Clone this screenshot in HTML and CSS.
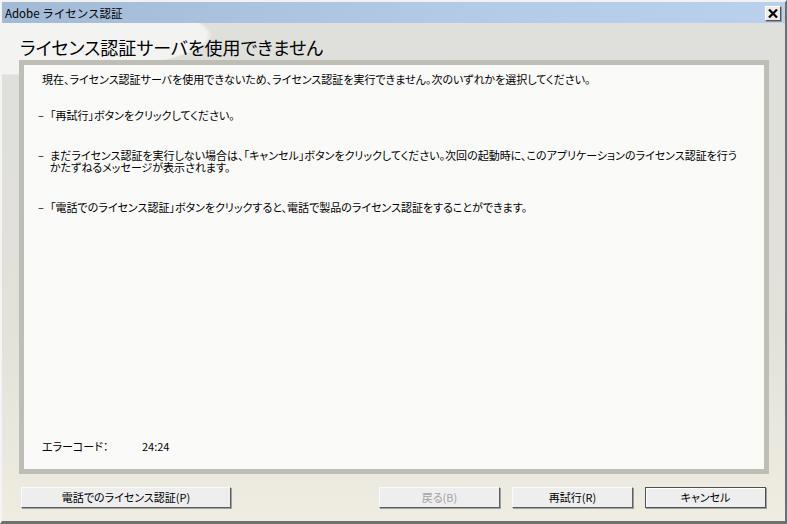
FILE: index.html
```html
<!DOCTYPE html>
<html lang="ja">
<head>
<meta charset="UTF-8">
<title>Adobe ライセンス認証</title>
<link rel="stylesheet" href="styles.css">
</head>
<body>
<div class="window">
  <div class="titlebar">
    <span class="title-text">Adobe ライセンス認証</span>
    <button class="close-btn" aria-label="閉じる">
      <svg width="10" height="9" viewBox="0 0 10 9"><path d="M1 0.5 L9 8.5 M9 0.5 L1 8.5" stroke="#000" stroke-width="2.2"/></svg>
    </button>
  </div>
  <div class="content">
    <h1 class="heading">ライセンス認証サーバを使用できません</h1>
    <div class="panel">
      <p class="lead">現在、ライセンス認証サーバを使用できないため、ライセンス認証を実行できません。次のいずれかを選択してください。</p>
      <ul class="items">
        <li><span class="dash">–</span><span>「再試行」ボタンをクリックしてください。</span></li>
        <li><span class="dash">–</span><span>まだライセンス認証を実行しない場合は、「キャンセル」ボタンをクリックしてください。次回の起動時に、このアプリケーションのライセンス認証を行う<br>かたずねるメッセージが表示されます。</span></li>
        <li><span class="dash">–</span><span>「電話でのライセンス認証」ボタンをクリックすると、電話で製品のライセンス認証をすることができます。</span></li>
      </ul>
      <div class="error-code">
        <span class="code-label">エラーコード：</span>
        <span>24:24</span>
      </div>
    </div>
    <div class="buttons">
      <button class="btn btn-phone">電話でのライセンス認証(P)</button>
      <div class="btn-group">
        <button class="btn" disabled>戻る(B)</button>
        <button class="btn">再試行(R)</button>
        <button class="btn btn-default">キャンセル</button>
      </div>
    </div>
  </div>
</div>
</body>
</html>
```

FILE: styles.css
```css
* { margin: 0; padding: 0; box-sizing: border-box; }
body {
  font-family: "Noto Sans CJK JP", "Liberation Sans", sans-serif;
  font-size: 11px;
  font-feature-settings: "palt";
  color: #000;
  background: #dfdfdb;
}
.window {
  width: 787px; height: 524px;
  display: flex; flex-direction: column;
  border-top: 2px solid #f2f2f2;
  border-left: 2px solid #f4f4f4;
  border-right: 2px solid #6f6f6f;
  border-bottom: 3px solid #6f6f6f;
  box-shadow: inset -1px 0 0 #c8c8c4;
}
.titlebar {
  height: 21px; flex: none;
  display: flex; align-items: center; justify-content: space-between;
  padding: 0 4px 0 3px;
  background: linear-gradient(90deg, #a2bad6, #b3cbe6 60%, #b9d1ec);
}
.title-text { font-size: 11.5px; line-height: 14px; font-feature-settings: normal; }
.close-btn {
  width: 16px; height: 15px;
  display: flex; align-items: center; justify-content: center;
  background: #ececea;
  border: 1px solid;
  border-color: #fff #555 #555 #fff;
  box-shadow: 1px 1px 0 #999;
  margin-top: 1px;
}
.content {
  flex: 1;
  display: flex; flex-direction: column;
  background:
    radial-gradient(ellipse 200px 40px at 10px 12px, #f3f3f1 97%, transparent 100%),
    linear-gradient(180deg, #dfdfdb 0%, #e2e1da 60%, #efede1 100%);
}
.heading {
  font-size: 18px; font-weight: normal;
  line-height: 20px;
  padding: 14px 0 0 18px;
  height: 37px;
}
.panel {
  margin-left: 17px;
  width: 750px; height: 414px;
  border: 5px solid #bebeb7;
  background: #fafaf8;
  display: flex; flex-direction: column;
  padding: 8px 0 17px 18px;
}
.lead { line-height: 12px; white-space: nowrap; }
.items { list-style: none; margin-top: 24px; padding-left: 0; margin-left: -5px; }
.items li { display: flex; line-height: 12px; margin-bottom: 28px; white-space: nowrap; }
.dash { width: 13px; flex: none; padding-left: 1px; }
.error-code { margin-top: auto; display: flex; line-height: 12px; }
.code-label { width: 100px; }
.buttons {
  display: flex; justify-content: space-between;
  padding: 13px 19px 0 19px;
}
.btn-group { display: flex; gap: 12px; }
.btn {
  width: 121px; height: 21px;
  font-family: inherit; font-size: 11px; color: #000;
  font-feature-settings: "palt";
  background: #eeeeee;
  border: 1px solid;
  border-color: #fafafa #5e5e5e #5e5e5e #fafafa;
  box-shadow: 1px 1px 0 #a0a0a0;
  line-height: 17px;
}
.btn-phone { width: 210px; }
.btn:disabled { color: #a3a3a3; }
.btn-default { border-color: #505050; box-shadow: inset 1px 1px 0 #fff, 1px 1px 0 #a0a0a0; }
```
